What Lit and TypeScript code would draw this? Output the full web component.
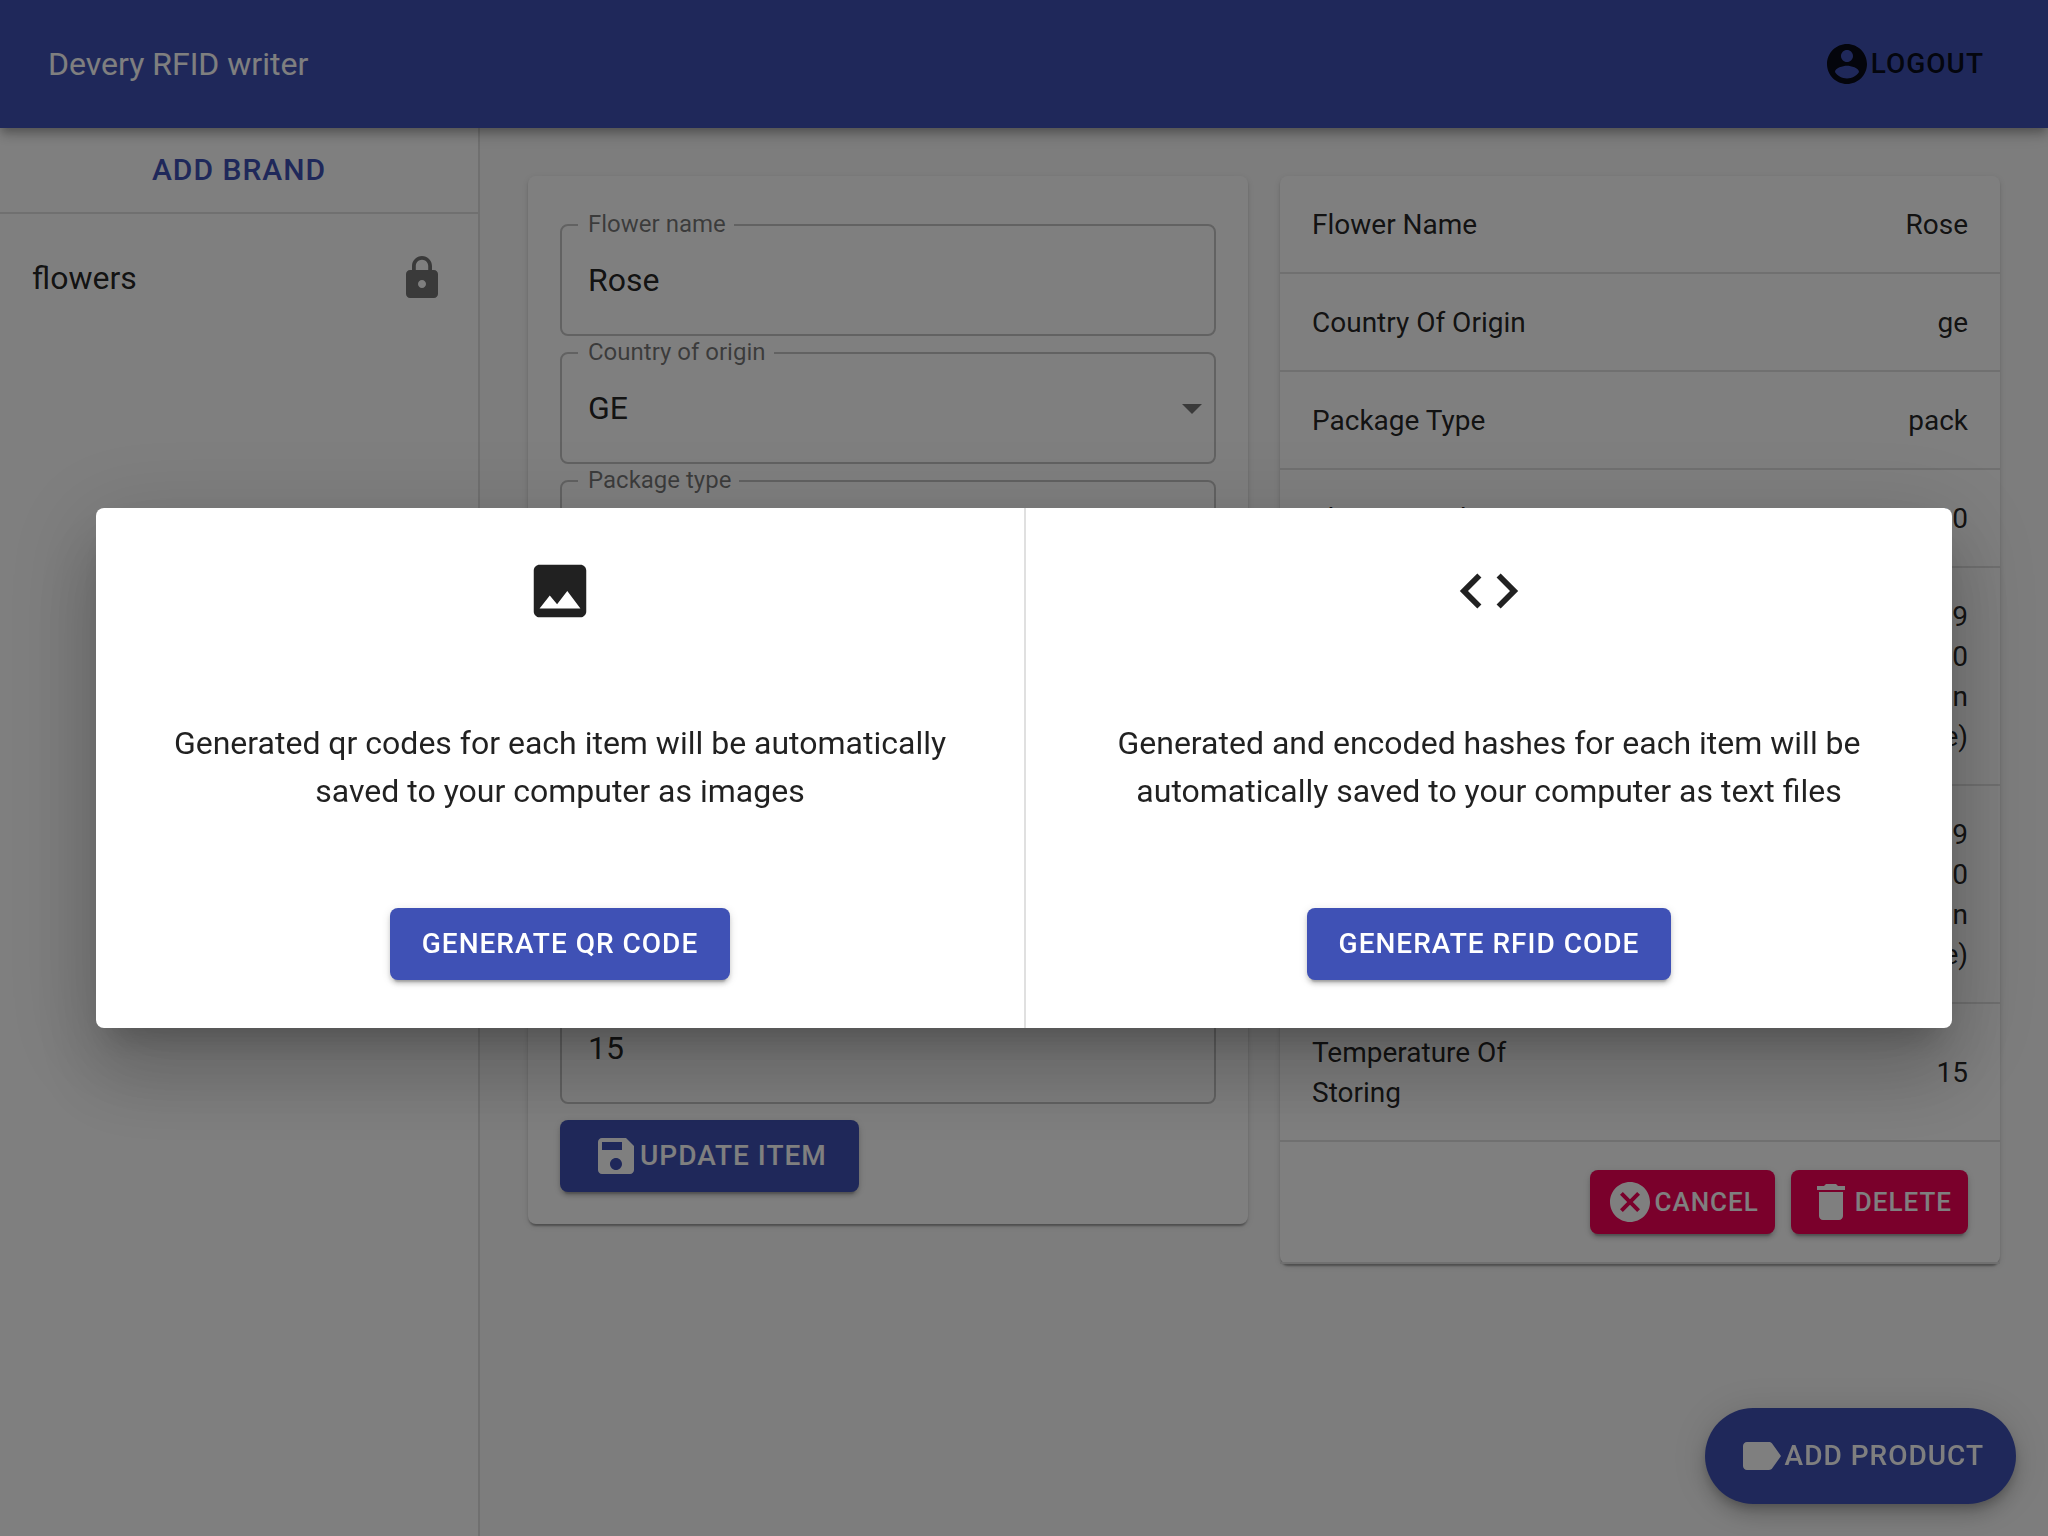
import { LitElement, html, css, svg, nothing } from "lit";
import { customElement, property } from "lit/decorators.js";

const ICONS: Record<string, string> = {
  account:
    "M12 2C6.48 2 2 6.48 2 12s4.48 10 10 10 10-4.48 10-10S17.52 2 12 2zm0 3c1.66 0 3 1.34 3 3s-1.34 3-3 3-3-1.34-3-3 1.34-3 3-3zm0 14.2c-2.5 0-4.71-1.28-6-3.22.03-1.99 4-3.08 6-3.08 1.99 0 5.97 1.09 6 3.08-1.29 1.94-3.5 3.22-6 3.22z",
  lock: "M18 8h-1V6c0-2.76-2.24-5-5-5S7 3.24 7 6v2H6c-1.1 0-2 .9-2 2v10c0 1.1.9 2 2 2h12c1.1 0 2-.9 2-2V10c0-1.1-.9-2-2-2zm-6 9c-1.1 0-2-.9-2-2s.9-2 2-2 2 .9 2 2-.9 2-2 2zm3.1-9H8.9V6c0-1.71 1.39-3.1 3.1-3.1 1.71 0 3.1 1.39 3.1 3.1v2z",
  save: "M17 3H5c-1.11 0-2 .9-2 2v14c0 1.1.89 2 2 2h14c1.1 0 2-.9 2-2V7l-4-4zm-5 16c-1.66 0-3-1.34-3-3s1.34-3 3-3 3 1.34 3 3-1.34 3-3 3zm3-10H5V5h10v4z",
  cancel:
    "M12 2C6.47 2 2 6.47 2 12s4.47 10 10 10 10-4.47 10-10S17.53 2 12 2zm5 13.59L15.59 17 12 13.41 8.41 17 7 15.59 10.59 12 7 8.41 8.41 7 12 10.59 15.59 7 17 8.41 13.41 12 17 15.59z",
  trash: "M6 19c0 1.1.9 2 2 2h8c1.1 0 2-.9 2-2V7H6v12zM19 4h-3.5l-1-1h-5l-1 1H5v2h14V4z",
  label:
    "M17.63 5.84C17.27 5.33 16.67 5 16 5L5 5.01C3.9 5.01 3 5.9 3 7v10c0 1.1.9 1.99 2 1.99L16 19c.67 0 1.27-.33 1.63-.84L22 12l-4.37-6.16z",
  image:
    "M21 19V5c0-1.1-.9-2-2-2H5c-1.1 0-2 .9-2 2v14c0 1.1.9 2 2 2h14c1.1 0 2-.9 2-2zM8.5 13.5l2.5 3.01L14.5 12l4.5 6H5l3.5-4.5z",
  code: "M9.4 16.6L4.8 12l4.6-4.6L8 6l-6 6 6 6 1.4-1.4zm5.2 0l4.6-4.6-4.6-4.6L16 6l6 6-6 6-1.4-1.4z",
  arrow: "M7 10l5 5 5-5z",
};

const icon = (name: string, cls = "icon") => html`
  <svg class=${cls} viewBox="0 0 24 24" aria-hidden="true">${svg`<path d=${ICONS[name]}></path>`}</svg>
`;

const controls = css`
  * {
    box-sizing: border-box;
  }
  .icon {
    width: 48px;
    height: 48px;
    fill: currentColor;
    flex: none;
    display: block;
  }
  .button {
    display: inline-flex;
    align-items: center;
    justify-content: center;
    height: 72px;
    padding: 0 32px;
    border: 0;
    border-radius: 8px;
    background: none;
    color: rgba(0, 0, 0, 0.87);
    font: 500 28px/48px Roboto, "Liberation Sans", sans-serif;
    letter-spacing: 1px;
    text-transform: uppercase;
    white-space: nowrap;
    cursor: pointer;
  }
  .primary,
  .secondary {
    color: #fff;
    box-shadow: 0 6px 2px -4px rgba(0, 0, 0, 0.2), 0 4px 4px 0 rgba(0, 0, 0, 0.14),
      0 2px 10px 0 rgba(0, 0, 0, 0.12);
  }
  .primary {
    background: #3f51b5;
  }
  .secondary {
    background: #f50057;
  }
  .small {
    height: 64px;
    padding: 0 16px;
    font-size: 26px;
  }
`;

interface Field {
  id: string;
  label: string;
  value: string;
  options?: string[];
}

const FIELDS: Field[] = [
  { id: "name", label: "Flower name", value: "Rose" },
  { id: "country", label: "Country of origin", value: "GE", options: ["GE", "NL", "EC"] },
  { id: "package", label: "Package type", value: "pack", options: ["pack", "box"] },
  { id: "height", label: "Flower height", value: "10" },
  { id: "cut", label: "Date of cutting", value: "2019-01-09" },
  { id: "expiry", label: "Date of expiry", value: "2019-01-19" },
  { id: "temperature", label: "Temperature of storing", value: "15" },
];

const DATE = ["Wed Jan 09 2019", "00:00:00 GMT+0200", "(Eastern European", "Standard Time)"];

const DETAILS: [string, string[]][] = [
  ["Flower Name", ["Rose"]],
  ["Country Of Origin", ["ge"]],
  ["Package Type", ["pack"]],
  ["Flower Height", ["10"]],
  ["Date Of Cutting", DATE],
  ["Date Of Expiry", DATE],
  ["Temperature Of Storing", ["15"]],
];

@customElement("outlined-field")
export class OutlinedField extends LitElement {
  @property({ attribute: false }) field!: Field;

  static styles = [
    controls,
    css`
      :host {
        display: block;
      }
      .field {
        position: relative;
        display: grid;
        align-items: center;
        height: 112px;
      }
      .label {
        position: absolute;
        top: -12px;
        left: 18px;
        padding: 0 8px 0 10px;
        background: #fff;
        color: rgba(0, 0, 0, 0.54);
        font-size: 24px;
        line-height: 24px;
      }
      .control {
        grid-area: 1 / 1;
        width: 100%;
        height: 100%;
        margin: 0;
        padding: 0 26px;
        border: 2px solid rgba(0, 0, 0, 0.23);
        border-radius: 8px;
        background: none;
        color: rgba(0, 0, 0, 0.87);
        font: 400 32px/40px Roboto, "Liberation Sans", sans-serif;
        appearance: none;
      }
      .arrow {
        grid-area: 1 / 1;
        justify-self: end;
        width: 48px;
        height: 48px;
        fill: rgba(0, 0, 0, 0.54);
        pointer-events: none;
      }
    `,
  ];

  render() {
    const { id, label, value, options } = this.field;
    return html`
      <div class="field">
        ${options
          ? html`<select class="control" id=${id}>
                ${options.map((o) => html`<option ?selected=${o === value}>${o}</option>`)}
              </select>
              ${icon("arrow", "arrow")}`
          : html`<input class="control" id=${id} type="text" .value=${value} />`}
        <label class="label" for=${id}>${label}</label>
      </div>
    `;
  }
}

@customElement("generate-dialog")
export class GenerateDialog extends LitElement {
  static styles = [
    controls,
    css`
      :host {
        position: fixed;
        inset: 0;
        z-index: 10;
        display: flex;
        align-items: center;
        justify-content: center;
        padding: 96px;
        background: rgba(0, 0, 0, 0.5);
      }
      .dialog {
        display: grid;
        grid-template-columns: 1fr 1fr;
        width: 100%;
        border-radius: 8px;
        background: #fff;
        box-shadow: 0 22px 30px -14px rgba(0, 0, 0, 0.2), 0 48px 76px 6px rgba(0, 0, 0, 0.14),
          0 18px 92px 16px rgba(0, 0, 0, 0.12);
      }
      .choice {
        display: flex;
        flex-direction: column;
        align-items: center;
        gap: 93px;
        padding: 48px;
      }
      .choice + .choice {
        border-left: 2px solid #e0e0e0;
      }
      .picture {
        width: 70px;
        height: 70px;
        fill: rgba(0, 0, 0, 0.87);
      }
      .text {
        margin: 0;
        color: rgba(0, 0, 0, 0.87);
        font-size: 32px;
        line-height: 48px;
        text-align: center;
      }
    `,
  ];

  private choice(name: string, text: string, action: string) {
    return html`
      <section class="choice">
        ${icon(name, "picture")}
        <p class="text">${text}</p>
        <button class="button primary" type="button">${action}</button>
      </section>
    `;
  }

  render() {
    return html`
      <div class="dialog" role="dialog" aria-modal="true" aria-label="Generate codes">
        ${this.choice(
          "image",
          "Generated qr codes for each item will be automatically saved to your computer as images",
          "Generate QR code"
        )}
        ${this.choice(
          "code",
          "Generated and encoded hashes for each item will be automatically saved to your computer as text files",
          "Generate RFID code"
        )}
      </div>
    `;
  }
}

@customElement("app-root")
export class AppRoot extends LitElement {
  static styles = [
    controls,
    css`
      :host {
        display: flex;
        flex-direction: column;
        min-height: 100vh;
        background: #fafafa;
        color: rgba(0, 0, 0, 0.87);
        font-family: Roboto, "Liberation Sans", sans-serif;
      }
      .bar {
        position: relative;
        z-index: 1;
        display: flex;
        align-items: center;
        justify-content: space-between;
        height: 128px;
        padding: 0 32px 0 48px;
        background: #3f51b5;
        box-shadow: 0 4px 8px -2px rgba(0, 0, 0, 0.2), 0 8px 10px 0 rgba(0, 0, 0, 0.14),
          0 2px 20px 0 rgba(0, 0, 0, 0.12);
      }
      .title {
        margin: 0;
        color: #fff;
        font-size: 32px;
        font-weight: 400;
        line-height: 48px;
      }
      .body {
        flex: 1;
        display: flex;
      }
      .drawer {
        flex: none;
        width: 480px;
        border-right: 2px solid rgba(0, 0, 0, 0.12);
        background: #fff;
      }
      .add {
        width: 100%;
        height: 84px;
        border-radius: 0;
        color: #3f51b5;
        font-size: 30px;
      }
      .brands {
        margin: 0;
        padding: 16px 0;
        border-top: 2px solid rgba(0, 0, 0, 0.12);
        list-style: none;
      }
      .brand {
        display: flex;
        align-items: center;
        justify-content: space-between;
        height: 96px;
        padding: 0 32px;
        color: inherit;
        font-size: 32px;
        line-height: 48px;
        text-decoration: none;
      }
      .brand .icon {
        color: rgba(0, 0, 0, 0.54);
      }
      .content {
        flex: 1;
        display: grid;
        grid-template-columns: 1fr 1fr;
        align-items: start;
        gap: 32px;
        padding: 48px;
      }
      .card {
        border-radius: 8px;
        background: #fff;
        box-shadow: 0 4px 2px -2px rgba(0, 0, 0, 0.2), 0 2px 2px 0 rgba(0, 0, 0, 0.14),
          0 2px 6px 0 rgba(0, 0, 0, 0.12);
      }
      .form {
        display: flex;
        flex-direction: column;
        align-items: stretch;
        gap: 16px;
        padding: 48px 32px 32px;
      }
      .form .button {
        align-self: flex-start;
      }
      .table {
        width: 100%;
        border-collapse: separate;
        border-spacing: 0;
        font-size: 28px;
        line-height: 40px;
      }
      .key,
      .value,
      .foot {
        border-bottom: 2px solid #e0e0e0;
        font-weight: 400;
      }
      .key,
      .value {
        padding: 29px 32px 27px;
      }
      .foot {
        padding: 28px 32px;
      }
      .key {
        width: 40%;
        text-align: left;
      }
      .value {
        text-align: right;
      }
      .actions {
        display: flex;
        justify-content: flex-end;
        gap: 16px;
      }
      .fab {
        position: fixed;
        right: 32px;
        bottom: 32px;
        height: 96px;
        border-radius: 48px;
        box-shadow: 0 6px 10px -2px rgba(0, 0, 0, 0.2), 0 12px 20px 0 rgba(0, 0, 0, 0.14),
          0 2px 36px 0 rgba(0, 0, 0, 0.12);
      }
    `,
  ];

  render() {
    return html`
      <header class="bar">
        <h1 class="title">Devery RFID writer</h1>
        <button class="button" type="button">${icon("account")}Logout</button>
      </header>
      <div class="body">
        <nav class="drawer">
          <button class="button add" type="button">Add brand</button>
          <ul class="brands">
            <li><a class="brand" href="#flowers">flowers ${icon("lock")}</a></li>
          </ul>
        </nav>
        <main class="content">
          <form class="card form">
            ${FIELDS.map((field) => html`<outlined-field .field=${field}></outlined-field>`)}
            <button class="button primary" type="button">${icon("save")}Update item</button>
          </form>
          <section class="card">
            <table class="table">
              <tbody>
                ${DETAILS.map(
                  ([key, lines]) => html`
                    <tr>
                      <th class="key" scope="row">${key}</th>
                      <td class="value">${lines.map((line, i) => html`${i ? html`<br />` : nothing}${line}`)}</td>
                    </tr>
                  `
                )}
              </tbody>
              <tfoot>
                <tr>
                  <td class="foot" colspan="2">
                    <div class="actions">
                      <button class="button secondary small" type="button">${icon("cancel")}Cancel</button>
                      <button class="button secondary small" type="button">${icon("trash")}Delete</button>
                    </div>
                  </td>
                </tr>
              </tfoot>
            </table>
          </section>
        </main>
      </div>
      <button class="button primary fab" type="button">${icon("label")}Add product</button>
      <generate-dialog></generate-dialog>
    `;
  }
}
